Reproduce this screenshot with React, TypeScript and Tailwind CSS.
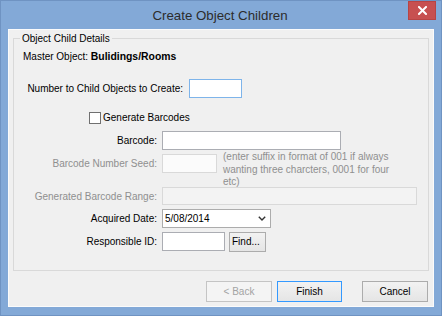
import React from "react";

const font = { fontFamily: '"Liberation Sans", Arial, sans-serif' };

function Label({ width, disabled, children }: { width: string; disabled?: boolean; children: React.ReactNode }) {
  return (
    <div
      className={`${width} shrink-0 text-right pr-[5px] ${
        disabled ? "text-[#8f8f8f]" : "text-black"
      }`}
    >
      {children}
    </div>
  );
}

function CloseIcon() {
  return (
    <svg width="9" height="9" viewBox="0 0 9 9">
      <path d="M1 1 L8 8 M8 1 L1 8" stroke="white" strokeWidth="2" strokeLinecap="square" />
    </svg>
  );
}

function Chevron() {
  return (
    <svg width="8" height="5" viewBox="0 0 8 5">
      <path d="M0.8 0.8 L4 4 L7.2 0.8" stroke="#333" strokeWidth="1.4" fill="none" />
    </svg>
  );
}

export default function App() {
  return (
    <div
      className="w-[442px] h-[316px] bg-[#83a9d7] border border-[#6f93c2] flex flex-col text-[10px] leading-[13px]"
      style={font}
    >
      {/* Title bar */}
      <div className="h-[28px] flex shrink-0">
        <div className="flex-1" />
        <div className="self-center text-[13.3px] text-[#2c2c2c] pt-[1px] pl-[3px]">Create Object Children</div>
        <div className="flex-1 flex justify-end items-start pr-[5px]">
          <button className="w-[28px] h-[19px] bg-[#c75050] border border-[#b84444] flex items-center justify-center">
            <CloseIcon />
          </button>
        </div>
      </div>

      {/* Client area */}
      <div className="ml-[7px] w-[426px] h-[278px] bg-[#f0f0f0] border border-[#fbfbfb] flex flex-col">
        <fieldset className="ml-[4px] mt-[2px] w-[416px] border border-[#d9d9d9] px-[6px] pb-[18px]">
          <legend className="px-[2px] text-black leading-[13px]">Object Child Details</legend>

          {/* Master object */}
          <div className="mt-[5px] h-[13px] ml-[3px] flex items-center">
            <span>Master Object:&nbsp;</span>
            <span className="font-bold text-[10.4px]">Bulidings/Rooms</span>
          </div>

          {/* Number of children */}
          <div className="mt-[16px] h-[19px] flex items-center">
            <div className="w-[169px] shrink-0 text-right pr-[6px]">Number to Child Objects to Create:</div>
            <div className="w-[53px] h-[19px] bg-white border border-[#7eb4ea]" />
          </div>

          {/* Generate barcodes */}
          <div className="mt-[13px] h-[13px] flex items-center pl-[69px]">
            <div className="w-[12px] h-[12px] bg-white border border-[#707070] shrink-0" />
            <span className="ml-[2px]">Generate Barcodes</span>
          </div>

          {/* Barcode */}
          <div className="mt-[7px] h-[19px] flex items-center">
            <Label width="w-[142px]">Barcode:</Label>
            <div className="w-[179px] h-[19px] bg-white border border-[#abadb3]" />
          </div>

          {/* Barcode number seed */}
          <div className="mt-[4px] h-[19px] flex items-center">
            <Label width="w-[142px]" disabled>
              Barcode Number Seed:
            </Label>
            <div className="w-[55px] h-[19px] bg-[#fbfbfb] border border-[#d9d9d9] shrink-0" />
            <div className="ml-[6px] self-start -mt-[3px] h-[19px] leading-[12.5px] text-[#8f8f8f] w-[172px]">
              (enter suffix in format of 001 if always wanting three charcters, 0001 for four etc)
            </div>
          </div>

          {/* Generated range */}
          <div className="mt-[14px] h-[18px] flex items-center">
            <Label width="w-[142px]" disabled>
              Generated Barcode Range:
            </Label>
            <div className="w-[255px] h-[18px] bg-[#f3f3f3] border border-[#d9d9d9]" />
          </div>

          {/* Acquired date */}
          <div className="mt-[4px] h-[19px] flex items-center">
            <Label width="w-[142px]">Acquired Date:</Label>
            <div className="w-[109px] h-[19px] bg-white border border-[#acacac] flex items-center pl-[2px] pr-[4px]">
              <span className="flex-1">5/08/2014</span>
              <Chevron />
            </div>
          </div>

          {/* Responsible */}
          <div className="mt-[3px] h-[21px] flex items-center">
            <Label width="w-[142px]">Responsible ID:</Label>
            <div className="w-[63px] h-[19px] bg-white border border-[#abadb3]" />
            <button className="ml-[4px] w-[37px] h-[20px] border border-[#acacac] bg-gradient-to-b from-[#f2f2f2] to-[#e5e5e5] text-black text-left pl-[2px]">
              Find...
            </button>
          </div>
        </fieldset>

        {/* Footer buttons */}
        <div className="mt-[10px] flex justify-end pr-[5px]">
          <button className="w-[66px] h-[21px] border border-[#c4c4c4] bg-[#f4f4f4] text-[#a3a3a3]">&lt; Back</button>
          <button className="ml-[5px] w-[65px] h-[21px] border border-[#3399ff] bg-gradient-to-b from-[#f2f2f2] to-[#e5e5e5] text-black">
            Finish
          </button>
          <button className="ml-[20px] w-[66px] h-[21px] border border-[#acacac] bg-gradient-to-b from-[#f2f2f2] to-[#e5e5e5] text-black">
            Cancel
          </button>
        </div>
      </div>
    </div>
  );
}
